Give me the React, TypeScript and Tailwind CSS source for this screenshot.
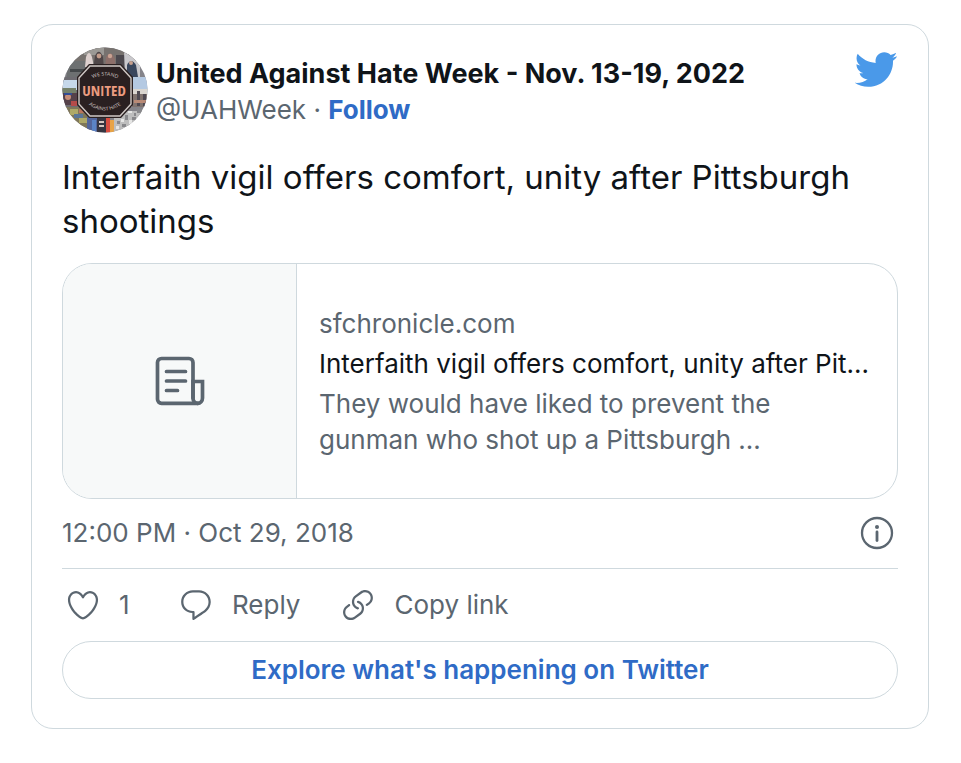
import type { ReactNode } from "react";

const MUTED = "text-[#5b6670]";

function Avatar() {
  return (
    <svg viewBox="0 0 86 86" className="size-[86px] shrink-0" role="img" aria-label="United Against Hate Week">
      <defs>
        <clipPath id="avatar-clip">
          <circle cx="43" cy="43" r="42.5" />
        </clipPath>
        <path id="arc-top" d="M22 37 Q43 20 64 37" />
        <path id="arc-bottom" d="M19 51 Q43 76 67 51" />
      </defs>
      <g clipPath="url(#avatar-clip)">
        <rect width="86" height="86" fill="#85848a" />
        {/* crowd along the top */}
        <path d="M12 0h62v22H12z" fill="#77726f" />
        <path d="M22 0h20v8H22z" fill="#9b9995" />
        <path d="M6 20l4-6h18l8 4v14H4z" fill="#6d7071" />
        <path d="M8 22h16v3H8z" fill="#44484a" />
        <path d="M24 10q3-8 6 0l2 10h-9z" fill="#ddd0ce" />
        <path d="M33 9q4-9 8 1l1 12H31z" fill="#4f4648" />
        <circle cx="37" cy="9" r="2.4" fill="#c39d8b" />
        <path d="M44 10q5-8 9 2v11H43z" fill="#8d6f6a" />
        <circle cx="48" cy="9" r="2.2" fill="#caa292" />
        <path d="M54 8h9l3 17H54z" fill="#4c484e" />
        <path d="M62 4l16 12v14H63z" fill="#c9c8cc" />
        <path d="M65 18q4-8 9 0l2 12H65z" fill="#39465d" />
        <circle cx="69" cy="16" r="2" fill="#c7a08e" />
        {/* left side */}
        <path d="M0 30h20v30H0z" fill="#6e6c72" />
        <path d="M1 33h14v10H1z" fill="#c6d8ea" />
        <path d="M0 41h14v5H0z" fill="#75816a" />
        <path d="M0 46h15v12H0z" fill="#55414a" />
        <circle cx="6" cy="50" r="3" fill="#c78d78" />
        <path d="M2 46h8v2H2z" fill="#324c95" />
        <path d="M9 54h6v5H9z" fill="#b54b49" />
        {/* right side */}
        <path d="M69 30h17v30H69z" fill="#b4c9e2" />
        <path d="M70 42h16v5H70z" fill="#dad6d0" />
        <path d="M70 47h16v13H70z" fill="#80736f" />
        <path d="M75 44h3v15h-3zM81 47h3v12h-3z" fill="#4f4a52" />
        <path d="M72 53h12v3H72z" fill="#b98a76" />
        {/* bottom row */}
        <path d="M4 60h26v26H4z" fill="#7f7759" />
        <path d="M8 62h8v6H8zM17 71h8v5h-8z" fill="#aea968" />
        <path d="M12 67h9v4h-9z" fill="#5a7698" />
        <path d="M17 62h5v4h-5z" fill="#bb765e" />
        <path d="M25 70h12v16H25z" fill="#53659c" />
        <path d="M30 73h4v12h-4z" fill="#5b83c6" />
        <path d="M35 70h9v16h-9z" fill="#363440" />
        <path d="M37 74h5v2h-5zM37 78h5v2h-5z" fill="#d6c7c1" />
        <path d="M44 71h4v15h-4z" fill="#d84d40" />
        <path d="M48 73h4v13h-4z" fill="#e8a346" />
        <path d="M52 64h34v22H52z" fill="#bebebe" />
        <path d="M55 74h3v3h-3zM63 68h3v5h-3zM70 70h4v3h-4zM60 77h4v3h-4zM75 62h5v4h-5zM68 79h4v3h-4zM72 66h2v3h-2z" fill="#88888b" />
        <path d="M59 72h3v3h-3zM67 73h3v4h-3zM54 79h3v3h-3zM76 72h3v3h-3zM66 64h4v2h-4z" fill="#e6e6e5" />
      </g>
      <path d="M27 17h32l12 13v28L59 71H27L15 58V30z" fill="#2a2021" />
      <path d="M28 19h30l11 12v26L58 69H28L17 57V31z" fill="none" stroke="#cfc8c5" strokeWidth="1.4" />
      <text x="42" y="49" textAnchor="middle" fill="#eb9c80" fontSize="15" fontWeight="700" fontFamily="'Open Sans Condensed', 'DejaVu Sans Condensed', sans-serif">
        UNITED
      </text>
      <g fill="#c5bcb9" fontSize="5" fontFamily="Lato, sans-serif">
        <text textAnchor="middle">
          <textPath href="#arc-top" startOffset="50%">WE STAND</textPath>
        </text>
        <text textAnchor="middle">
          <textPath href="#arc-bottom" startOffset="50%">AGAINST HATE</textPath>
        </text>
      </g>
    </svg>
  );
}

function TwitterBird() {
  return (
    <svg viewBox="0 0 24 24" className="size-[45px] fill-[#4a99e9]" aria-hidden="true">
      <path d="M23.643 4.937c-.835.37-1.732.62-2.675.733.962-.576 1.7-1.49 2.048-2.578-.9.534-1.897.922-2.958 1.13-.85-.904-2.06-1.47-3.4-1.47-2.572 0-4.658 2.086-4.658 4.66 0 .364.042.718.12 1.06-3.873-.195-7.304-2.05-9.602-4.868-.4.69-.63 1.49-.63 2.342 0 1.616.823 3.043 2.072 3.878-.764-.025-1.482-.234-2.11-.583v.06c0 2.257 1.605 4.14 3.737 4.568-.392.106-.803.162-1.227.162-.3 0-.593-.028-.877-.082.593 1.85 2.313 3.198 4.352 3.234-1.595 1.25-3.604 1.995-5.786 1.995-.376 0-.747-.022-1.112-.065 2.062 1.323 4.51 2.093 7.14 2.093 8.57 0 13.255-7.098 13.255-13.254 0-.2-.005-.402-.014-.602.91-.658 1.7-1.477 2.323-2.41z" />
    </svg>
  );
}

function ArticleIcon() {
  return (
    <svg viewBox="0 0 50 50" className="size-[50px]" fill="none" stroke="#5b6670" strokeWidth="3.7" strokeLinecap="round" aria-hidden="true">
      <path d="M43 47.3H6.5a4 4 0 0 1-4-4V6.5a4 4 0 0 1 4-4H34a4 4 0 0 1 4 4V42" />
      <path d="M38 25.5h9.5V42a4.75 5.3 0 0 1-9.5 0V25.5z" />
      <path d="M11.5 15.5h19M11.5 25h19M11.5 34.5h11" />
    </svg>
  );
}

function InfoIcon() {
  return (
    <svg viewBox="0 0 34 34" className="size-[34px]" fill="none" stroke="#5b6670" aria-hidden="true">
      <circle cx="17" cy="17" r="15" strokeWidth="2.3" />
      <path d="M17 16v8.5" strokeWidth="2.8" strokeLinecap="round" />
      <circle cx="17" cy="11" r="2" fill="#5b6670" stroke="none" />
    </svg>
  );
}

function Action({ label, paths }: { label: ReactNode; paths: string[] }) {
  return (
    <button type="button" className={`flex items-center gap-[18px] ${MUTED}`}>
      <svg viewBox="0 0 24 24" className="size-9 fill-current" aria-hidden="true">
        {paths.map((d) => (
          <path key={d} d={d} />
        ))}
      </svg>
      <span className="min-w-[19px] text-left">{label}</span>
    </button>
  );
}

const HEART = [
  "M12 21.638h-.014C9.403 21.59 1.95 14.856 1.95 8.478c0-3.064 2.525-5.754 5.403-5.754 2.29 0 3.83 1.58 4.646 2.73.814-1.148 2.354-2.73 4.645-2.73 2.88 0 5.404 2.69 5.404 5.755 0 6.376-7.454 13.11-10.037 13.157H12zM7.354 4.225c-2.08 0-3.903 1.988-3.903 4.255 0 5.74 7.034 11.596 8.55 11.658 1.518-.062 8.55-5.917 8.55-11.658 0-2.267-1.823-4.255-3.903-4.255-2.528 0-3.94 2.936-3.952 2.965-.23.562-1.156.562-1.387 0-.014-.03-1.425-2.965-3.954-2.965z",
];

const BUBBLE = [
  "M14.046 2.242l-4.148-.01h-.002c-4.374 0-7.8 3.427-7.8 7.802 0 4.098 3.186 7.206 7.465 7.37v3.828c0 .108.044.286.12.403.142.225.384.347.632.347.138 0 .277-.038.402-.118.264-.168 6.473-4.14 8.088-5.506 1.902-1.61 3.04-3.97 3.043-6.312v-.017c-.006-4.367-3.43-7.787-7.8-7.788zm3.787 12.972c-1.134.96-4.862 3.405-6.772 4.643V16.67c0-.414-.335-.75-.75-.75h-.396c-3.66 0-6.318-2.476-6.318-5.886 0-3.534 2.768-6.302 6.3-6.302l4.147.01h.002c3.532 0 6.3 2.766 6.302 6.296-.003 1.91-.942 3.844-2.514 5.176z",
];

const LINK = [
  "M11.96 14.945c-.067 0-.136-.01-.203-.027-1.13-.318-2.097-.986-2.795-1.932-.832-1.125-1.176-2.508-.968-3.893s.942-2.605 2.068-3.438l3.53-2.608c2.322-1.716 5.61-1.224 7.33 1.1.83 1.127 1.175 2.51.967 3.895s-.943 2.605-2.07 3.438l-1.48 1.094c-.333.246-.804.175-1.05-.158-.246-.334-.176-.804.158-1.05l1.48-1.095c.803-.592 1.327-1.463 1.476-2.45.148-.988-.098-1.975-.69-2.778-1.225-1.656-3.572-2.01-5.23-.784l-3.53 2.608c-.802.593-1.326 1.464-1.475 2.45-.15.99.097 1.975.69 2.778.498.675 1.187 1.15 1.992 1.377.4.114.633.528.52.928-.092.33-.394.547-.722.547z",
  "M7.27 22.054c-1.61 0-3.197-.735-4.225-2.125-.832-1.127-1.176-2.51-.968-3.894s.943-2.605 2.07-3.438l1.478-1.094c.334-.245.805-.175 1.05.158s.177.804-.157 1.05l-1.48 1.095c-.803.593-1.326 1.464-1.475 2.45-.148.99.097 1.975.69 2.778 1.225 1.657 3.57 2.01 5.23.785l3.528-2.608c1.658-1.225 2.01-3.57.785-5.23-.498-.674-1.187-1.15-1.992-1.376-.4-.113-.633-.527-.52-.927.112-.4.528-.63.926-.522 1.13.318 2.096.986 2.794 1.932 1.717 2.324 1.224 5.612-1.1 7.33l-3.53 2.608c-.933.693-2.023 1.026-3.105 1.026z",
];

export default function App() {
  return (
    <main className="min-h-screen bg-white pt-6 pr-8 pb-8 pl-[31px] font-[Inter,sans-serif] text-[26px] leading-9 text-[#0f1419]">
      <article className="rounded-[22px] border border-[#cfd9de] px-[30px] pt-[22px] pb-[29px]">
        <header className="flex items-start">
          <Avatar />
          <div className="min-w-0 flex-1 pt-[9px] pl-2">
            <h1 className="text-[27px] font-bold whitespace-nowrap">United Against Hate Week - Nov. 13-19, 2022</h1>
            <p className={MUTED}>
              @UAHWeek ·{" "}
              <a href="#follow" className="font-bold text-[#2f6bc6]">
                Follow
              </a>
            </p>
          </div>
          <a href="#twitter" aria-label="View on Twitter">
            <TwitterBird />
          </a>
        </header>

        <p className="mt-[22px] text-[33px] leading-[44px]">
          Interfaith vigil offers comfort, unity after Pittsburgh shootings
        </p>

        <a href="#article" className="mt-[20px] flex h-[236px] overflow-hidden rounded-[30px] border border-[#cfd9de]">
          <div className="flex w-[234px] shrink-0 items-center justify-center border-r border-[#cfd9de] bg-[#f7f9f9]">
            <ArticleIcon />
          </div>
          <div className="flex min-w-0 flex-1 flex-col justify-center gap-1 px-[22px] pt-[2px]">
            <p className={MUTED}>sfchronicle.com</p>
            <p className="whitespace-nowrap">Interfaith vigil offers comfort, unity after Pit...</p>
            <p className={MUTED}>
              They would have liked to prevent the
              <br />
              gunman who shot up a Pittsburgh ...
            </p>
          </div>
        </a>

        <div className="mt-4 flex items-center justify-between pr-1">
          <time dateTime="2018-10-29T12:00" className={MUTED}>
            12:00 PM · Oct 29, 2018
          </time>
          <button type="button" aria-label="Twitter Ads info and privacy">
            <InfoIcon />
          </button>
        </div>

        <div className="mt-[17px] flex gap-10 border-t border-[#cfd9de] pt-[18px] pl-[3px]">
          <Action label="1" paths={HEART} />
          <Action label="Reply" paths={BUBBLE} />
          <Action label="Copy link" paths={LINK} />
        </div>

        <a
          href="#explore"
          className="mt-[18px] flex h-[58px] items-center justify-center rounded-full border border-[#cfd9de] font-semibold text-[#2f6bc6]"
        >
          Explore what's happening on Twitter
        </a>
      </article>
    </main>
  );
}
